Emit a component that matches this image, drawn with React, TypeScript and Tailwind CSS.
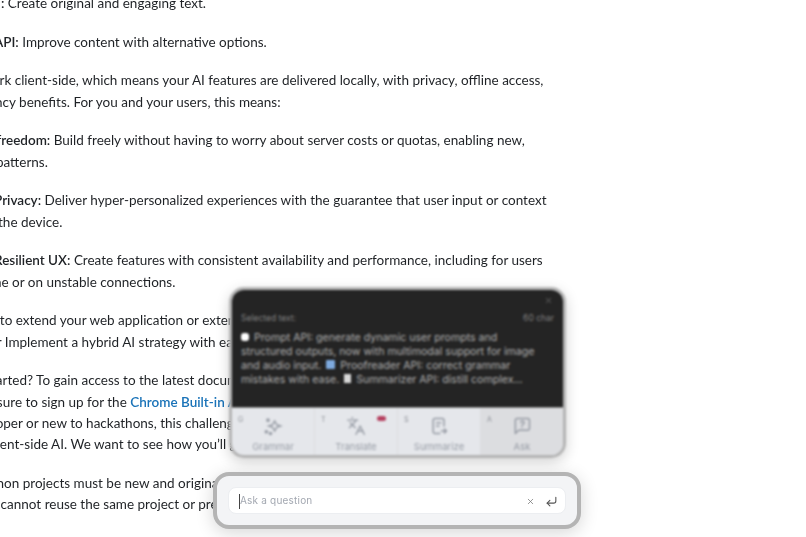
import { CornerDownLeft, Languages, X } from "lucide-react";

function Tool({ hint, label, active, children }: { hint: string; label: string; active?: boolean; children: React.ReactNode }) {
  return (
    <div className={`relative flex-1 flex flex-col items-center pt-[8px] border-r border-[#dcdde0] last:border-r-0 ${active ? "bg-[#dcdde0]" : ""}`}>
      <span className="absolute left-[6px] top-[1px] text-[7px] text-[#8b8f96]">{hint}</span>
      {children}
      <span className="mt-[5px] text-[9.5px] leading-[12px] text-[#979ca5]">{label}</span>
    </div>
  );
}

export default function App() {
  return (
    <div className="relative h-[537px] w-[806px] overflow-hidden bg-white font-['Lato',sans-serif] text-[13.5px] leading-[21.3px] text-[#1f2226]">
      <div className="-mt-[7px] whitespace-nowrap blur-[0.3px]">
        <p className="-ml-[62px]"><b className="font-semibold">Writer API:</b> Create original and engaging text.</p>
        <p className="-ml-[60px] mt-[17.4px]"><b className="font-semibold">Rewriter API:</b> Improve content with alternative options.</p>
        <p className="-ml-[87px] mt-[17.4px]">These APIs work client-side, which means your AI features are delivered locally, with privacy, offline access,</p>
        <p className="-ml-[52px]">and latency benefits. For you and your users, this means:</p>
        <p className="-ml-[57px] mt-[17.4px]"><b className="font-semibold">Creative freedom:</b> Build freely without having to worry about server costs or quotas, enabling new,</p>
        <p className="-ml-[69px]">innovative patterns.</p>
        <p className="-ml-[6px] mt-[17.4px]"><b className="font-semibold">Privacy:</b> Deliver hyper-personalized experiences with the guarantee that user input or context</p>
        <p className="-ml-[54px]">stays on the device.</p>
        <p className="-ml-[6px] mt-[17.4px]"><b className="font-semibold">Resilient UX:</b> Create features with consistent availability and performance, including for users</p>
        <p className="-ml-[29px]">offline or on unstable connections.</p>
        <p className="-ml-[50px] mt-[17.4px]">Looking to extend your web application or extension?</p>
        <p className="-ml-[14px]">Or Implement a hybrid AI strategy with ease</p>
        <p className="-ml-[40px] mt-[17.4px]">Get started? To gain access to the latest documentation</p>
        <p className="-ml-[38px]">make sure to sign up for the <a className="font-semibold text-[#1a73b8]">Chrome Built-in AI</a></p>
        <p className="-ml-[36px]">developer or new to hackathons, this challenge</p>
        <p className="-ml-[13px]">client-side AI. We want to see how you’ll go</p>
        <p className="-ml-[45px] mt-[17.4px]">Hackathon projects must be new and original</p>
        <p className="-ml-[25px]">You cannot reuse the same project or previous</p>
      </div>

      <div className="absolute left-[229px] top-[287px] h-[171px] w-[337px] overflow-hidden rounded-[15px] border-[3px] border-[#b4b4b4] bg-[#e5e7eb] shadow-[0_4px_14px_rgba(0,0,0,0.18)] blur-[1.3px] font-['Inter',sans-serif]">
        <div className="relative h-[117px] bg-[#242424] px-[9px] pt-[21px] text-[#b0b0b0]">
          <X className="absolute right-[10px] top-[6px] h-[9px] w-[9px] text-[#777]" />
          <div className="flex justify-between text-[8.5px] leading-[14px] text-[#808080]">
            <span>Selected text:</span>
            <span>60 char</span>
          </div>
          <p className="mt-[6px] whitespace-nowrap text-[10.6px] leading-[13.9px]">
            <span className="mr-[5px] inline-block h-[8px] w-[8px] rounded-[3px] bg-white" />
            Prompt API: generate dynamic user prompts and
            <br />
            structured outputs, now with multimodal support for image
            <br />
            and audio input. <span className="mx-[2px] inline-block h-[9px] w-[9px] rounded-[1px] bg-[#7da9de]" /> Proofreader API: correct grammar
            <br />
            mistakes with ease. <span className="mx-[2px] inline-block h-[9px] w-[7px] bg-[#d8d8d8]" /> Summarizer API: distill complex...
          </p>
        </div>
        <div className="flex h-[51px] border-t border-[#8f8f8f]">
          <Tool hint="G" label="Grammar">
            <svg viewBox="0 0 24 24" className="h-[20px] w-[20px] text-[#979ca5]" fill="none" stroke="currentColor" strokeWidth="1.8">
              <path d="M14 6l2.500 4.500L21 12l-4.500 1.500L14 18l-2.500-4.500L7 12l4.500-1.500z" />
              <circle cx="6" cy="5" r="1.300" fill="currentColor" />
              <circle cx="4" cy="19" r="1.300" fill="currentColor" />
              <circle cx="9" cy="21" r="1.300" fill="currentColor" />
            </svg>
          </Tool>
          <Tool hint="T" label="Translate">
            <Languages className="h-[20px] w-[20px] text-[#979ca5]" strokeWidth={1.6} />
            <span className="absolute right-[11px] top-[8px] h-[5px] w-[9px] rounded-full bg-[#b5405f]" />
          </Tool>
          <Tool hint="S" label="Summarize">
            <svg viewBox="0 0 24 24" className="h-[20px] w-[20px] text-[#979ca5]" fill="none" stroke="currentColor" strokeWidth="1.8" strokeLinecap="round" strokeLinejoin="round">
              <path d="M18 12V5a2 2 0 0 0-2-2H7a2 2 0 0 0-2 2v14a2 2 0 0 0 2 2h6" />
              <path d="M9 8h5M9 12h3" />
              <path d="M15 18h6M18.500 15.500L21 18l-2.500 2.500" />
            </svg>
          </Tool>
          <Tool hint="A" label="Ask" active>
            <svg viewBox="0 0 24 24" className="h-[20px] w-[20px] text-[#979ca5]" fill="none" stroke="currentColor" strokeWidth="1.8" strokeLinecap="round" strokeLinejoin="round">
              <path d="M21 15a2 2 0 0 1-2 2H8l-4 4V5a2 2 0 0 1 2-2h13a2 2 0 0 1 2 2z" />
              <path d="M10.500 7.500a2 2 0 1 1 2.500 2.500c-.6.3-1 .7-1 1.300M12 13.800h.01" />
            </svg>
          </Tool>
        </div>
      </div>

      <div className="absolute left-[213px] top-[472px] h-[57px] w-[368px] rounded-[16px] border-[4px] border-[#b4b4b4] bg-[#f3f4f6] p-[11px] shadow-[0_4px_18px_rgba(0,0,0,0.16)] blur-[0.7px] font-['Inter',sans-serif]">
        <div className="flex h-[27px] items-center rounded-[8px] border border-[#eceef1] bg-white pl-[10px] pr-[7px] pt-[1px]">
          <span className="h-[15px] w-px bg-[#444]" />
          <span className="flex-1 text-[10px] tracking-[0.2px] text-[#a3a8b1]">Ask a question</span>
          <X className="-mr-[1px] h-[9px] w-[9px] text-[#777]" />
          <CornerDownLeft className="ml-[11px] h-[13px] w-[13px] text-[#555]" />
        </div>
      </div>
    </div>
  );
}
